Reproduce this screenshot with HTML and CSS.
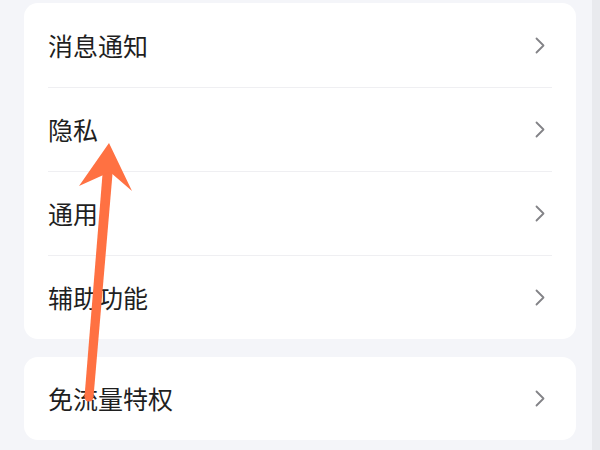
FILE: index.html
```html
<!DOCTYPE html>
<html lang="zh">
<head>
<meta charset="utf-8">
<link rel="stylesheet" href="styles.css">
</head>
<body>
<div class="screen">
  <main class="content">
    <section class="card">
      <div class="row first"><span class="label">消息通知</span><svg class="chev" width="10" height="17" viewBox="0 0 10 17"><path d="M1.5 1.5 L8.5 8.5 L1.5 15.5" fill="none" stroke="#838387" stroke-width="1.8" stroke-linecap="round" stroke-linejoin="round"/></svg></div>
      <div class="row"><span class="label">隐私</span><svg class="chev" width="10" height="17" viewBox="0 0 10 17"><path d="M1.5 1.5 L8.5 8.5 L1.5 15.5" fill="none" stroke="#838387" stroke-width="1.8" stroke-linecap="round" stroke-linejoin="round"/></svg></div>
      <div class="row"><span class="label">通用</span><svg class="chev" width="10" height="17" viewBox="0 0 10 17"><path d="M1.5 1.5 L8.5 8.5 L1.5 15.5" fill="none" stroke="#838387" stroke-width="1.8" stroke-linecap="round" stroke-linejoin="round"/></svg></div>
      <div class="row last"><span class="label">辅助功能</span><svg class="chev" width="10" height="17" viewBox="0 0 10 17"><path d="M1.5 1.5 L8.5 8.5 L1.5 15.5" fill="none" stroke="#838387" stroke-width="1.8" stroke-linecap="round" stroke-linejoin="round"/></svg></div>
    </section>
    <section class="card">
      <div class="row last"><span class="label">免流量特权</span><svg class="chev" width="10" height="17" viewBox="0 0 10 17"><path d="M1.5 1.5 L8.5 8.5 L1.5 15.5" fill="none" stroke="#838387" stroke-width="1.8" stroke-linecap="round" stroke-linejoin="round"/></svg></div>
    </section>
  </main>
  <div class="edge"></div>
  <svg class="annot" width="600" height="450" viewBox="0 0 600 450">
    <polygon points="103,168 113,168 93.5,397 84.5,397" fill="#ff7142"/>
    <circle cx="89" cy="397" r="4.5" fill="#ff7142"/>
    <polygon points="109,143 132,191 110,172 79,186" fill="#ff7142"/>
  </svg>
</div>
</body>
</html>
```

FILE: styles.css
```css
html, body {
  margin: 0;
  padding: 0;
}
body {
  background: #f4f5f9;
  font-family: "Noto Sans CJK SC", "Noto Sans", sans-serif;
  color: #1f1f1f;
}
.screen {
  position: relative;
  width: 600px;
  height: 450px;
  overflow: hidden;
  display: flex;
}
.content {
  width: 552px;
  padding: 3px 16px 0 24px;
  display: flex;
  flex-direction: column;
  gap: 18px;
}
.edge {
  width: 8px;
  background: #e9eaee;
}
.card {
  background: #ffffff;
  border-radius: 14px;
}
.row {
  margin: 0 24px;
  height: 83px;
  border-bottom: 1px solid #efeff2;
  display: flex;
  align-items: center;
  justify-content: space-between;
  padding-right: 7px;
}
.row.first {
  height: 84px;
}
.row.last {
  border-bottom: none;
  height: 83px;
}
.label {
  font-size: 25px;
  line-height: 1;
}
.chev {
  display: block;
}
.annot {
  position: absolute;
  left: 0;
  top: 0;
  pointer-events: none;
}
```
